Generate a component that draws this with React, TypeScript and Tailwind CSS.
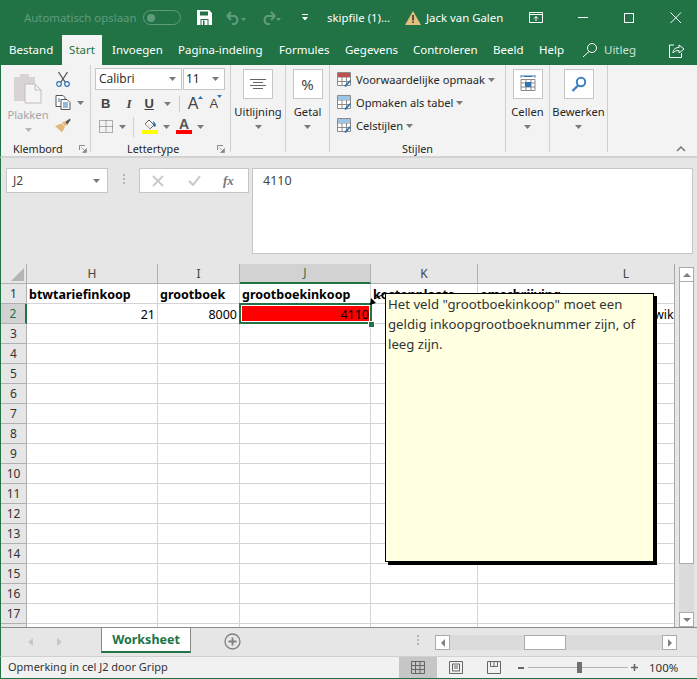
import React from "react";

const ui = "font-['Noto_Sans','Open_Sans',sans-serif]";

function Caret({ className = "", color = "#7a7a7a" }: { className?: string; color?: string }) {
  return (
    <svg width="7" height="4" viewBox="0 0 7 4" className={className}>
      <path d="M0 0h7L3.5 4z" fill={color} />
    </svg>
  );
}

function Launcher() {
  return (
    <svg width="8" height="8" viewBox="0 0 8 8">
      <path d="M0.5 5V0.5H6" fill="none" stroke="#8a8a8a" />
      <path d="M2.5 2.5L6 6M7.5 3.5V7.5H3.5z" fill="#8a8a8a" stroke="#8a8a8a" strokeWidth="0.7" />
    </svg>
  );
}

function Sep() {
  return <div className="w-px bg-[#d0d0d0] self-stretch mb-1" />;
}

function BigButton({ label, width, box, children }: { label: string; width: number; box: string; children: React.ReactNode }) {
  return (
    <div className="flex flex-col items-center pt-1" style={{ width }}>
      <div className={`w-[30px] h-[30px] bg-white border border-[#c6c6c6] flex items-center justify-center ${box}`}>{children}</div>
      <div className="text-[11.2px] leading-[16px] mt-[5px] text-[#262626] whitespace-nowrap">{label}</div>
      <Caret className="mt-[5px]" />
    </div>
  );
}

const tabs: [string, number][] = [
  ["Invoegen", 112],
  ["Pagina-indeling", 178],
  ["Formules", 279],
  ["Gegevens", 345],
  ["Controleren", 413],
  ["Beeld", 493],
  ["Help", 539],
];

const rowsN = Array.from({ length: 18 }, (_, i) => i + 1);
const colHeads = ["H", "I", "J", "K", "L"];

function Cell({ r, c }: { r: number; c: number }) {
  const base = "border-r border-b border-[#d4d4d4] h-5 overflow-hidden whitespace-nowrap text-[12.5px] leading-[21px] text-black";
  const heads = ["btwtariefinkoop", "grootboek", "grootboekinkoop", "kostenplaats", "omschrijving"];
  if (r === 1) return <div className={`${base} font-bold pl-[2px]`}>{heads[c]}</div>;
  if (r === 2) {
    if (c === 0) return <div className={`${base} text-right pr-[2px]`}>21</div>;
    if (c === 1) return <div className={`${base} text-right pr-[2px]`}>8000</div>;
    if (c === 2)
      return <div className={`${base} text-right pr-[1px] bg-[#ff0000]`}>4110</div>;
    if (c === 4) return <div className={`${base} pl-[176px]`}>wik</div>;
  }
  return <div className={base} />;
}

export default function App() {
  return (
    <div className={`${ui} w-[697px] h-[679px] relative overflow-hidden bg-[#e6e6e6] flex flex-col`}>
      {/* Title bar */}
      <div className="h-[35px] bg-[#217346] flex items-center text-[11.4px] text-white shrink-0">
        <span className="ml-[24px] w-[112px] text-[#5f9c7c] whitespace-nowrap">Automatisch opslaan</span>
        <div className="ml-[7px] w-[38px] h-[15px] rounded-full border border-[#5f9c7c] flex items-center pl-[3px]">
          <div className="w-[8px] h-[8px] rounded-full bg-[#5f9c7c]" />
        </div>
        <svg width="15" height="15" viewBox="0 0 15 15" className="ml-[16px]">
          <path d="M0 0h12l3 3v12H0z" fill="#fff" />
          <path d="M3 1.5h8v4H3zM3.5 9h8v6h-8z" fill="#217346" />
          <path d="M4.5 10h6v5h-6z" fill="#fff" />
          <path d="M6 10.5h1.5V15H6z" fill="#217346" />
        </svg>
        <svg width="20" height="14" viewBox="0 0 20 14" className="ml-[14px]">
          <path d="M1 5l4-4M1 5l4 4M1 5h8a4.5 4.5 0 0 1 0 8H6" fill="none" stroke="#5f9c7c" strokeWidth="2" />
          <path d="M15 7h5l-2.5 3z" fill="#5f9c7c" />
        </svg>
        <svg width="20" height="14" viewBox="0 0 20 14" className="ml-[15px]">
          <path d="M14 5l-4-4M14 5l-4 4M14 5H6a4.5 4.5 0 0 0 0 8h3" fill="none" stroke="#5f9c7c" strokeWidth="2" />
          <path d="M15 7h5l-2.5 3z" fill="#5f9c7c" />
        </svg>
        <svg width="6" height="7" viewBox="0 0 6 7" className="ml-[21px]">
          <path d="M0 0h6v1H0zM0 3h6L3 6.5z" fill="#fff" />
        </svg>
        <span className="ml-[19px] w-[64px] whitespace-nowrap">skipfile (1)...</span>
        <svg width="16" height="14" viewBox="0 0 16 14" className="ml-[14px]">
          <path d="M8 0l8 14H0z" fill="#e5bf7e" />
          <path d="M7.2 4h1.6v5.5H7.2zM7.2 10.5h1.6V12H7.2z" fill="#333" />
        </svg>
        <span className="ml-[5px] w-[78px] whitespace-nowrap">Jack van Galen</span>
        <svg width="14" height="11" viewBox="0 0 14 11" className="ml-[25px]">
          <path d="M.5.5h13v10H.5zM.5 2.5h13M7 9V4.5M5 6.5l2-2 2 2" fill="none" stroke="#fff" />
        </svg>
        <div className="ml-[35px] w-[10px] h-px bg-white" />
        <div className="ml-[36px] w-[10px] h-[10px] border border-white" />
        <svg width="12" height="12" viewBox="0 0 12 12" className="ml-[36px]">
          <path d="M.5.5l10.5 10.5M11 .5L.5 11" fill="none" stroke="#fff" />
        </svg>
      </div>

      {/* Tab row */}
      <div className="h-[30px] bg-[#217346] flex items-stretch text-[11.5px] text-white shrink-0 relative">
        <span className="ml-[9px] w-[53px] leading-[30px]">Bestand</span>
        <span className="w-[40px] bg-[#f3f3f3] text-[#217346] text-center leading-[30px]">Start</span>
        <div className="flex-1 flex leading-[30px]">
          {tabs.map(([t, x], i) => (
            <span key={t} className="whitespace-nowrap" style={{ marginLeft: i === 0 ? 10 : x - tabs[i - 1][1] - 0, width: 0 }}>
              {t}
            </span>
          ))}
          <svg width="16" height="16" viewBox="0 0 16 16" className="ml-[43px] mt-[7px]">
            <circle cx="10" cy="6" r="4.5" fill="none" stroke="#fff" />
            <path d="M7 9.5L1 15" stroke="#fff" />
          </svg>
          <span className="ml-[6px] text-[#cfe3d8]">Uitleg</span>
          <svg width="16" height="14" viewBox="0 0 16 14" className="ml-[33px] mt-[9px]">
            <path d="M5 1H.5v12.5h12V9M4 9c0-4 3-5.500 6-5.500V1l5 4-5 4V6.500C7.500 6.500 5.500 7 4 9z" fill="none" stroke="#fff" />
          </svg>
        </div>
      </div>

      {/* Ribbon */}
      <div className="h-[93px] bg-[#f3f3f3] border-b-2 border-[#d2d2d2] border-l border-l-[#217346] flex shrink-0 text-[#262626]">
        {/* Klembord */}
        <div className="w-[89px] flex flex-col">
          <div className="flex h-[77px]">
            <div className="w-[54px] flex flex-col items-center pt-[7px]">
              <svg width="30" height="32" viewBox="0 0 30 32">
                <path d="M1 5h6V2h9v3h6v24H1z" fill="#d8d4d6" />
                <path d="M12 12h10l6 6v13H12z" fill="#f5f5f5" stroke="#c0bcbe" />
                <path d="M22 12v6h6" fill="none" stroke="#c0bcbe" />
              </svg>
              <span className="text-[11.2px] leading-[16px] text-[#a6a6a6] mt-[3px]">Plakken</span>
              <Caret color="#b5b5b5" className="mt-[5px]" />
            </div>
            <div className="flex flex-col pt-[6px] gap-[8px]">
              <svg width="16" height="16" viewBox="0 0 16 16">
                <path d="M3.500 1l6.500 10M12.500 1L6 11" stroke="#555" fill="none" strokeWidth="1.300" />
                <circle cx="4" cy="13" r="2.300" fill="none" stroke="#2e75b6" strokeWidth="1.200" />
                <circle cx="12" cy="13" r="2.300" fill="none" stroke="#2e75b6" strokeWidth="1.200" />
              </svg>
              <div className="flex items-center gap-[6px]">
                <svg width="16" height="15" viewBox="0 0 16 15">
                  <path d="M1 .5h7l2 2v9H1z" fill="#fff" stroke="#555" />
                  <path d="M6 4.500h6l3 3v7H6z" fill="#fff" stroke="#555" />
                  <path d="M8 8h5M8 10h5M8 12h5M3 4h2M3 6h2" stroke="#2e75b6" />
                </svg>
                <Caret />
              </div>
              <svg width="16" height="15" viewBox="0 0 16 15">
                <path d="M10 4L15 0.500 15.500 2 12 7z" fill="#555" />
                <path d="M9 3l4 4-3 1-3-3zM6.500 5.500L10 9l-3 5.500L0 8z" fill="#e2b778" />
              </svg>
            </div>
          </div>
          <div className="flex items-center h-[14px]">
            <span className="ml-[12px] w-[51px] text-[10.8px] leading-[14px] whitespace-nowrap">Klembord</span>
            <span className="ml-[15px] flex"><Launcher /></span>
          </div>
        </div>
        <Sep />
        {/* Lettertype */}
        <div className="w-[139px] flex flex-col">
          <div className="h-[77px] pl-[4px] pt-[3px]">
            <div className="flex gap-px h-[23px]">
              <div className="w-[87px] h-[22px] bg-white border border-[#c6c6c6] flex items-center justify-between px-[3px] text-[12px]">
                <span className="font-['Open_Sans',sans-serif]">Calibri</span>
                <Caret className="mr-[2px]" />
              </div>
              <div className="w-[42px] h-[22px] bg-white border border-[#c6c6c6] flex items-center justify-between px-[2px] text-[12px]">
                <span>11</span>
                <Caret className="mr-[3px]" />
              </div>
            </div>
            <div className="flex items-center h-[23px] mt-[1px] text-[13px] leading-none text-[#444]">
              <span className="ml-[6px] font-bold font-['Liberation_Sans',sans-serif]">B</span>
              <span className="ml-[16px] italic font-['Liberation_Serif',serif] font-bold">I</span>
              <span className="ml-[13px] font-bold underline font-['Liberation_Sans',sans-serif]">U</span>
              <Caret className="ml-[10px]" />
              <div className="ml-[8px] w-px h-[16px] bg-[#d0d0d0]" />
              <span className="ml-[8px] text-[16px] font-['Liberation_Sans',sans-serif] relative">
                A
                <svg width="5" height="3" viewBox="0 0 5 3" className="absolute right-[-4px] top-0">
                  <path d="M0 3h5L2.500 0z" fill="#2e75b6" />
                </svg>
              </span>
              <span className="ml-[11px] text-[13px] font-['Liberation_Sans',sans-serif] relative">
                A
                <svg width="5" height="3" viewBox="0 0 5 3" className="absolute right-[-4px] top-[-2px]">
                  <path d="M0 0h5L2.500 3z" fill="#2e75b6" />
                </svg>
              </span>
            </div>
            <div className="flex items-center h-[23px]">
              <svg width="14" height="13" viewBox="0 0 14 13" className="ml-[4px]">
                <path d="M.5.500h13v12H.5zM7 .5v12M.5 6.500h13" fill="none" stroke="#666" strokeDasharray="1 1" />
              </svg>
              <Caret className="ml-[6px]" />
              <div className="ml-[7px] w-px h-[20px] bg-[#d0d0d0]" />
              <div className="ml-[8px] flex flex-col items-center w-[16px]">
                <svg width="16" height="11" viewBox="0 0 16 11">
                  <path d="M7 1l5 5-4 4-5-5z" fill="#fff" stroke="#555" />
                  <path d="M3 5h8L8 10z" fill="#e9e9e9" />
                  <path d="M11 2c2 1 3 3 3 5l-2 1z" fill="#2e75b6" />
                </svg>
                <div className="w-[16px] h-[4px] bg-[#ffff00]" />
              </div>
              <Caret className="ml-[5px]" />
              <div className="ml-[6px] flex flex-col items-center w-[16px]">
                <span className="text-[14px] leading-[11px] h-[11px] font-bold text-[#555] font-['Liberation_Sans',sans-serif]">A</span>
                <div className="w-[16px] h-[4px] bg-[#ff0000]" />
              </div>
              <Caret className="ml-[5px]" />
            </div>
          </div>
          <div className="flex items-center h-[14px]">
            <span className="ml-[36px] w-[53px] text-[10.8px] leading-[14px] whitespace-nowrap">Lettertype</span>
            <span className="ml-[37px] flex"><Launcher /></span>
          </div>
        </div>
        <Sep />
        <BigButton label="Uitlijning" width={54} box="">
          <svg width="16" height="11" viewBox="0 0 16 11">
            <path d="M0 .5h16M3 3.500h10M0 6.500h16M3 9.500h10" stroke="#666" />
          </svg>
        </BigButton>
        <Sep />
        <BigButton label="Getal" width={43} box="">
          <span className="text-[15px] text-[#444]">%</span>
        </BigButton>
        <Sep />
        {/* Stijlen */}
        <div className="w-[175px] flex flex-col">
          <div className="h-[77px] pl-[7px] pt-[3px] text-[11.1px] leading-[23px]">
            {[
              ["Voorwaardelijke opmaak", "#c0504d"],
              ["Opmaken als tabel", "#9dc3e6"],
              ["Celstijlen", "#9dc3e6"],
            ].map(([t, col]) => (
              <div key={t} className="flex items-center h-[23px]">
                <svg width="14" height="15" viewBox="0 0 14 15">
                  <path d="M.5.500h13v13H.5zM.5 5h13M.5 9.500h13M5 .5v13M9.500 .5v13" fill="#fff" stroke="#8a8a8a" />
                  <path d="M1 1h12v4H1z" fill={col} />
                  <path d="M7 14l6-6 1 1-5 6z" fill="#2e75b6" />
                </svg>
                <span className="ml-[5px] whitespace-nowrap">{t}</span>
                <Caret className="ml-[3px]" />
              </div>
            ))}
          </div>
          <div className="h-[14px] text-center text-[10.8px] leading-[14px]">Stijlen</div>
        </div>
        <Sep />
        <BigButton label="Cellen" width={43} box="">
          <svg width="16" height="18" viewBox="0 0 16 18">
            <path d="M1 1h14M1 .5v2M15 .5v2M4 1.500h8" stroke="#2e75b6" />
            <path d="M1 4.500h14v11H1zM1 8h14M1 12h14M6 4.500v11M11 4.500v11" fill="none" stroke="#8a8a8a" />
            <path d="M5 7h6v5H5z" fill="#2e75b6" />
          </svg>
        </BigButton>
        <Sep />
        <BigButton label="Bewerken" width={57} box="">
          <svg width="16" height="16" viewBox="0 0 16 16">
            <circle cx="10" cy="6" r="4.200" fill="none" stroke="#3b7fc4" strokeWidth="2" />
            <path d="M7 9.500L1.500 15" stroke="#3b7fc4" strokeWidth="2.400" />
          </svg>
        </BigButton>
        <Sep />
        <div className="flex-1 flex justify-end items-end pb-[4px] pr-[11px]">
          <svg width="10" height="6" viewBox="0 0 10 6">
            <path d="M1 5l4-4 4 4" fill="none" stroke="#777" strokeWidth="1.500" />
          </svg>
        </div>
      </div>

      {/* Formula bar */}
      <div className="h-[106px] bg-[#e6e6e6] border-l border-l-[#217346] flex items-start shrink-0 text-[12px] text-[#444]">
        <div className="ml-[5px] mt-[10px] w-[102px] h-[25px] bg-white border border-[#c6c6c6] flex items-center justify-between pl-[6px] pr-[7px]">
          <span>J2</span>
          <Caret />
        </div>
        <div className="ml-[15px] mt-[16px] flex flex-col gap-[2px]">
          <div className="w-[2px] h-[2px] bg-[#b5b5b5]" />
          <div className="w-[2px] h-[2px] bg-[#b5b5b5]" />
          <div className="w-[2px] h-[2px] bg-[#b5b5b5]" />
        </div>
        <div className="ml-[14px] mt-[10px] w-[110px] h-[25px] bg-white border border-[#c6c6c6] flex items-center">
          <svg width="12" height="12" viewBox="0 0 12 12" className="ml-[12px]">
            <path d="M1 1l10 10M11 1L1 11" stroke="#c8c8c8" strokeWidth="1.800" />
          </svg>
          <svg width="13" height="11" viewBox="0 0 13 11" className="ml-[24px]">
            <path d="M1 6l4 4 7-9" fill="none" stroke="#c8c8c8" strokeWidth="2" />
          </svg>
          <span className="ml-[22px] italic font-bold text-[13px] text-[#777] font-['Liberation_Serif',serif]">fx</span>
        </div>
        <div className="ml-[3px] mt-[10px] w-[441px] h-[86px] bg-white border border-[#c6c6c6] pl-[10px] pt-[3px] text-[12.5px]">
          4110
        </div>
      </div>

      {/* Sheet */}
      <div className="flex-1 flex min-h-0 border-l border-l-[#217346] border-b border-b-[#8a8a8a] relative">
        <div className="w-[674px] overflow-hidden grid grid-cols-[26px_131px_82px_131px_107px_297px] auto-rows-[20px] content-start bg-white border-r border-r-[#a6a6a6]">
          <div className="bg-[#e6e6e6] border-r border-b border-[#b0b0b0] flex items-end justify-end p-[2px]">
            <svg width="13" height="13" viewBox="0 0 13 13"><path d="M13 0v13H0z" fill="#b5b5b5" /></svg>
          </div>
          {colHeads.map((h) => (
            <div
              key={h}
              className={
                h === "J"
                  ? "bg-[#d2d2d2] border-r border-[#b0b0b0] border-b-2 border-b-[#217346] text-[#217346] text-center text-[12px] leading-[18px]"
                  : "bg-[#e6e6e6] border-r border-b border-[#b0b0b0] text-[#444] text-center text-[12px] leading-[19px]"
              }
            >
              {h}
            </div>
          ))}
          {rowsN.map((r) => (
            <React.Fragment key={r}>
              <div
                className={
                  r === 2
                    ? "bg-[#d2d2d2] border-r-2 border-r-[#217346] border-b border-b-[#b0b0b0] text-[#217346] text-center text-[12px] leading-[20px]"
                    : "bg-[#e6e6e6] border-r border-b border-[#b0b0b0] text-[#333] text-center text-[12px] leading-[20px]"
                }
              >
                {r === 18 ? "" : r}
              </div>
              {[0, 1, 2, 3, 4].map((c) => (
                <Cell key={c} r={r} c={c} />
              ))}
            </React.Fragment>
          ))}
        </div>
        {/* Vertical scrollbar */}
        <div className="flex-1 pl-[4px] pt-[3px] flex flex-col">
          <div className="w-[15px] h-[361px] flex flex-col bg-[#dbdbdb]">
            <div className="h-[15px] bg-white border border-[#ababab] flex items-center justify-center">
              <svg width="8" height="4" viewBox="0 0 8 4"><path d="M0 4h8L4 0z" fill="#808080" /></svg>
            </div>
            <div className="w-[15px] h-[282px] bg-white border-x border-b border-[#ababab]" />
            <div className="flex-1" />
            <div className="h-[15px] bg-white border border-[#ababab] flex items-center justify-center">
              <svg width="8" height="4" viewBox="0 0 8 4"><path d="M0 0h8L4 4z" fill="#808080" /></svg>
            </div>
          </div>
        </div>

        {/* Selection overlay */}
        <div className="absolute left-[238px] top-[39px] w-[133px] h-[21px] border-2 border-[#217346] pointer-events-none">
          <div className="w-full h-full border border-white" />
        </div>
        <div className="absolute left-[367px] top-[57px] w-[5px] h-[5px] bg-[#217346] border border-white box-content" />

        {/* Comment */}
        <svg width="18" height="14" viewBox="0 0 18 14" className="absolute left-[368px] top-[28px]">
          <path d="M17 1L5 7" stroke="#000" />
          <path d="M1 13l1-7 5 5z" fill="#000" />
        </svg>
        <div className="absolute left-[384px] top-[29px] w-[269px] h-[269px] bg-[#ffffe1] border border-black shadow-[3px_3px_0_#000] pl-[2px] text-[13.2px] leading-[20px] text-[#333] whitespace-nowrap overflow-hidden">
          Het veld "grootboekinkoop" moet een
          <br />
          geldig inkoopgrootboeknummer zijn, of
          <br />
          leeg zijn.
        </div>
      </div>

      {/* Sheet tabs */}
      <div className="h-[28px] bg-[#e6e6e6] border-l border-l-[#217346] flex items-start shrink-0">
        <svg width="6" height="8" viewBox="0 0 6 8" className="ml-[27px] mt-[10px]"><path d="M5 0v8L0 4z" fill="#c6c6c6" /></svg>
        <svg width="6" height="8" viewBox="0 0 6 8" className="ml-[23px] mt-[10px]"><path d="M0 0v8l5-4z" fill="#c6c6c6" /></svg>
        <div className="ml-[38px] w-[90px] h-[25px] bg-white border-x border-[#8a8a8a] border-b-2 border-b-[#217346] text-center text-[12.5px] font-bold text-[#217346] leading-[23px]">
          Worksheet
        </div>
        <svg width="17" height="17" viewBox="0 0 17 17" className="ml-[33px] mt-[5px]">
          <circle cx="8.500" cy="8.500" r="7.500" fill="none" stroke="#808080" strokeWidth="1.300" />
          <path d="M4.500 8.500h8M8.500 4.500v8" stroke="#808080" strokeWidth="1.800" />
        </svg>
        <div className="ml-[176px] mt-[7px] flex flex-col gap-[2px]">
          <div className="w-[2px] h-[2px] bg-[#b5b5b5]" />
          <div className="w-[2px] h-[2px] bg-[#b5b5b5]" />
          <div className="w-[2px] h-[2px] bg-[#b5b5b5]" />
        </div>
        <div className="ml-[16px] mt-[7px] w-[242px] h-[15px] flex bg-[#dbdbdb]">
          <div className="w-[15px] h-[15px] bg-white border border-[#ababab] flex items-center justify-center">
            <svg width="4" height="8" viewBox="0 0 4 8"><path d="M4 0v8L0 4z" fill="#808080" /></svg>
          </div>
          <div className="ml-[74px] w-[42px] h-[15px] bg-white border border-[#ababab]" />
          <div className="flex-1" />
          <div className="w-[15px] h-[15px] bg-white border border-[#ababab] flex items-center justify-center">
            <svg width="4" height="8" viewBox="0 0 4 8"><path d="M0 0v8l4-4z" fill="#808080" /></svg>
          </div>
        </div>
      </div>

      {/* Status bar */}
      <div className="h-[23px] bg-[#f1f1f1] border-t border-t-[#d0d0d0] border-l border-l-[#217346] border-b border-b-[#217346] flex items-stretch shrink-0 text-[11px] text-[#333]">
        <span className="ml-[7px] w-[391px] leading-[20px]">Opmerking in cel J2 door Gripp</span>
        <div className="w-[38px] bg-[#c6c6c6] flex items-center justify-center">
          <svg width="14" height="13" viewBox="0 0 14 13"><path d="M.5.500h13v12H.5zM.5 4.500h13M.5 8.500h13M4.500.5v12M9 .5v12" fill="none" stroke="#666" /></svg>
        </div>
        <div className="w-[38px] flex items-center justify-center">
          <svg width="14" height="13" viewBox="0 0 14 13"><path d="M.5.500h13v12H.5zM3.500 3h7v7h-7zM5 5h4M5 7h4" fill="none" stroke="#666" /></svg>
        </div>
        <div className="w-[38px] flex items-center justify-center">
          <svg width="14" height="13" viewBox="0 0 14 13"><path d="M.5.500h13v12H.5zM3.500.5v5h7v-5M7 .5v5" fill="none" stroke="#666" /></svg>
        </div>
        <div className="flex items-center ml-[5px]">
          <div className="w-[6px] h-[2px] bg-[#666]" />
          <div className="ml-[4px] w-[100px] h-px bg-[#b0b0b0] relative">
            <div className="absolute left-[49px] top-[-5px] w-[5px] h-[11px] bg-[#707070]" />
          </div>
          <svg width="7" height="7" viewBox="0 0 7 7" className="ml-[3px]"><path d="M0 3.500h7M3.500 0v7" stroke="#666" strokeWidth="1.600" /></svg>
          <span className="ml-[11px] text-[11.5px]">100%</span>
        </div>
      </div>
    </div>
  );
}
